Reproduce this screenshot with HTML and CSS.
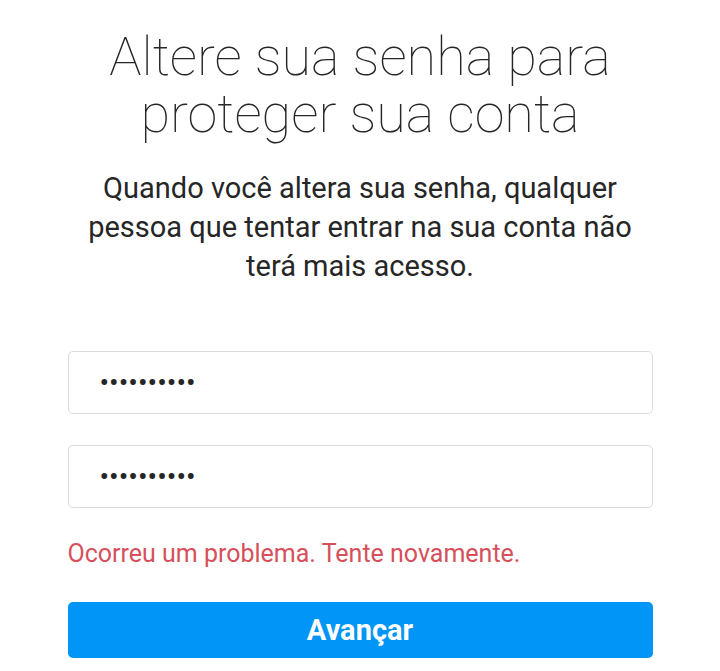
FILE: index.html
```html
<!DOCTYPE html>
<html lang="pt">
<head>
    <meta charset="UTF-8">
    <meta name="viewport" content="width=device-width, initial-scale=1.0">
    <title>Alterar senha</title>
    <link rel="stylesheet" href="styles.css">
</head>
<body>

    <div class="reset-container">
        <h1>Altere sua senha para proteger sua conta</h1>

        <p class="intro">Quando você altera sua senha, qualquer pessoa que tentar entrar na sua conta não terá mais acesso.</p>

        <div class="fields">
            <div class="field"><span class="dots">••••••••••</span></div>
            <div class="field"><span class="dots">••••••••••</span></div>
        </div>

        <p class="error-msg">Ocorreu um problema. Tente novamente.</p>

        <button class="next-btn">Avançar</button>
    </div>

</body>
</html>
```

FILE: styles.css
```css
* {
    margin: 0;
    padding: 0;
    box-sizing: border-box;
    font-family: Roboto, "Liberation Sans", sans-serif;
}

body {
    background-color: #ffffff;
}

.reset-container {
    width: 585px;
    margin: 0 auto;
    padding-top: 28px;
}

h1 {
    font-weight: 100;
    font-size: 54px;
    line-height: 57px;
    color: #262626;
    text-align: center;
    padding: 0 20px;
}

.intro {
    margin-top: 27px;
    font-size: 29px;
    line-height: 39px;
    color: #262626;
    text-align: center;
}

.fields {
    margin-top: 65px;
    display: flex;
    flex-direction: column;
    gap: 31px;
}

.field {
    height: 63px;
    border: 1px solid #dbdbdb;
    border-radius: 5px;
    padding-left: 31px;
    display: flex;
    align-items: center;
}

.dots {
    font-size: 28.5px;
    color: #262626;
}

.error-msg {
    margin-top: 31px;
    font-size: 25px;
    line-height: 30px;
    color: #d6505c;
}

.next-btn {
    display: block;
    width: 100%;
    height: 56px;
    margin-top: 33px;
    border: none;
    border-radius: 5px;
    background: #0095f6;
    color: white;
    font-size: 29px;
    font-weight: bold;
}
```
